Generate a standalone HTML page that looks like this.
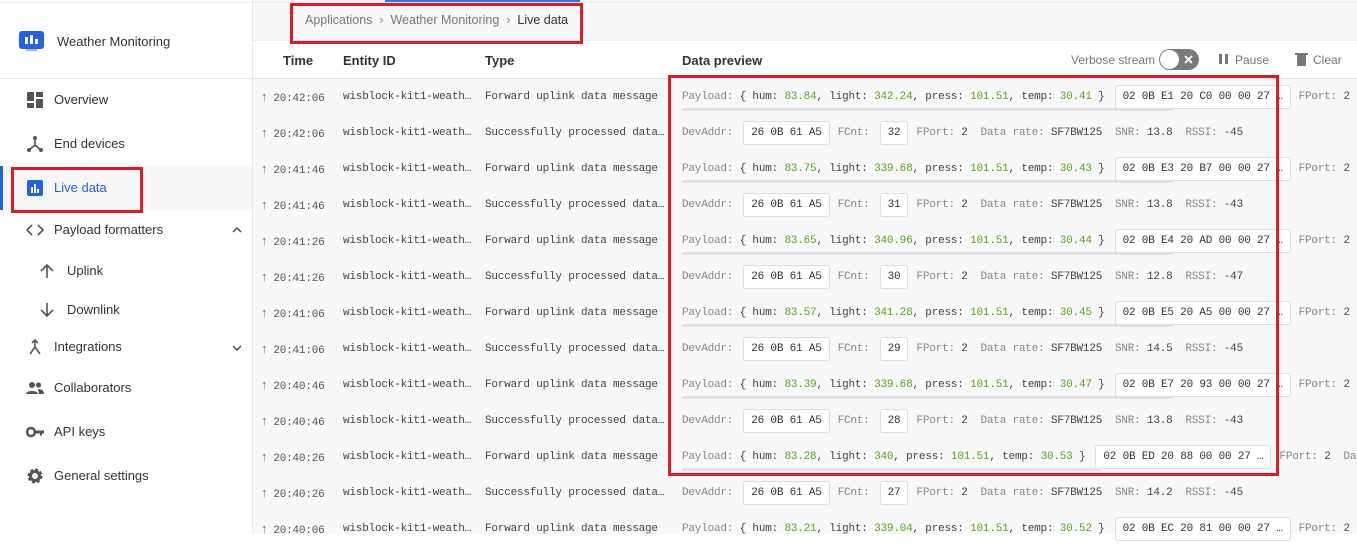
<!DOCTYPE html>
<html><head><meta charset="utf-8"><style>
*{box-sizing:border-box;margin:0;padding:0}
body{width:1357px;height:534px;overflow:hidden;background:#fff;font-family:"Liberation Sans",sans-serif;position:relative;color:#222}
.sb{position:absolute;left:0;top:0;width:253px;height:534px;background:#fff;border-right:1px solid #e8e8e8}
.topline{position:absolute;left:0;top:0;width:1357px;height:3px;border-bottom:1px solid #eee}
.blue{position:absolute;left:385px;top:0;width:195px;height:2px;background:#3b6fe0}
.nav{position:absolute;left:0;width:252px;height:44px;font-size:13px;color:#333}
.nav .ic{position:absolute;left:26px;top:13px;width:18px;height:18px}
.nav span{position:absolute;left:54px;top:14px}
.main{position:absolute;left:253px;top:0;right:0;bottom:0;background:#f8f8f8}
.hdr{position:absolute;left:253px;top:40px;right:0;height:39px;background:#fff;border-top:1px solid #eee;border-bottom:1px solid #e6e6e6;font-size:13px;color:#333}
.hdr b{position:absolute;top:12px;font-weight:bold}
.row{position:absolute;left:253px;right:0;height:36px;font-family:"Liberation Mono",monospace;font-size:11px;line-height:13px;color:#444;white-space:nowrap;overflow:hidden;letter-spacing:-0.2px}
.row .t{position:absolute;left:8px;top:10px;color:#555;line-height:16px}
.row .t i{font-style:normal;font-family:"Liberation Sans";font-size:13px;color:#777;margin-right:6px}
.row .e{position:absolute;left:90px;top:12px}
.row .y{position:absolute;left:232px;top:12px}
.row .d{position:absolute;left:429px;top:6px;height:24px;line-height:24px;white-space:pre}
.k{color:#888}.g{color:#5aa51a}
.box{display:inline-block;vertical-align:top;background:#fff;border:1px solid #ddd;border-radius:3px;height:24px;line-height:22px;padding:0 7px;color:#333;margin:0 8px 0 10px}
.bar{position:absolute;left:429px;top:29px;width:491px;height:3px;background:#e2e2e2}
.red{position:absolute;border:3px solid #e01b24}
.hs{position:absolute;top:12px;color:#777;font-size:12px}
</style></head><body>
<div class="main"></div>
<div class="sb">
 <div style="position:absolute;left:19px;top:31px;width:25px;height:18px;background:#2262e6;border-radius:3px"></div>
 <div style="position:absolute;left:25px;top:37px;width:3px;height:7px;background:#fff"></div>
 <div style="position:absolute;left:30px;top:35px;width:3px;height:9px;background:#fff"></div>
 <div style="position:absolute;left:35px;top:39px;width:3px;height:5px;background:#fff"></div>
 <div style="position:absolute;left:26px;top:49px;width:11px;height:2px;background:#9bb8f0"></div>
 <div style="position:absolute;left:57px;top:34px;font-size:13px;color:#333">Weather Monitoring</div>
 <div style="position:absolute;left:0;top:78px;width:252px;height:1px;background:#e8e8e8"></div>
 <div class="nav" style="top:78px"><svg class="ic" viewBox="0 0 18 18"><rect x="1" y="1" width="7" height="9" fill="#555"/><rect x="10" y="1" width="7" height="5" fill="#555"/><rect x="1" y="12" width="7" height="5" fill="#555"/><rect x="10" y="8" width="7" height="9" fill="#555"/></svg><span>Overview</span></div>
 <div class="nav" style="top:122px"><svg class="ic" viewBox="0 0 18 18"><path d="M9 3v7M9 10l-6 5M9 10l6 5" stroke="#555" stroke-width="1.6" fill="none"/><circle cx="9" cy="3" r="2" fill="#555"/><circle cx="3" cy="15" r="2" fill="#555"/><circle cx="15" cy="15" r="2" fill="#555"/></svg><span>End devices</span></div>
 <div class="nav" style="top:166px;background:#f7f7f7;color:#2262e6"><div style="position:absolute;left:0;top:0;width:3px;height:44px;background:#2262e6"></div><svg class="ic" viewBox="0 0 18 18"><rect x="1" y="1" width="16" height="16" rx="2" fill="#2262e6"/><rect x="5" y="8" width="2" height="6" fill="#fff"/><rect x="8" y="5" width="2" height="9" fill="#fff"/><rect x="11" y="10" width="2" height="4" fill="#fff"/></svg><span>Live data</span></div>
 <div class="nav" style="top:208px"><svg class="ic" viewBox="0 0 18 18"><path d="M6 4L1 9l5 5M12 4l5 5-5 5" stroke="#555" stroke-width="1.6" fill="none"/></svg><span>Payload formatters</span><svg style="position:absolute;left:232px;top:19px" width="10" height="6" viewBox="0 0 10 6"><path d="M1 5l4-4 4 4" stroke="#444" stroke-width="1.4" fill="none"/></svg></div>
 <div class="nav" style="top:249px"><svg class="ic" style="left:38px" viewBox="0 0 18 18"><path d="M9 16V3M3 9l6-6 6 6" stroke="#555" stroke-width="1.6" fill="none"/></svg><span style="left:67px">Uplink</span></div>
 <div class="nav" style="top:288px"><svg class="ic" style="left:38px" viewBox="0 0 18 18"><path d="M9 2v13M3 9l6 6 6-6" stroke="#555" stroke-width="1.6" fill="none"/></svg><span style="left:67px">Downlink</span></div>
 <div class="nav" style="top:325px"><svg class="ic" viewBox="0 0 18 18"><path d="M9 2v7l-5 7M9 9l5 7M6 5l3-3 3 3" stroke="#555" stroke-width="1.6" fill="none"/></svg><span>Integrations</span><svg style="position:absolute;left:232px;top:20px" width="10" height="6" viewBox="0 0 10 6"><path d="M1 1l4 4 4-4" stroke="#444" stroke-width="1.4" fill="none"/></svg></div>
 <div class="nav" style="top:366px"><svg class="ic" viewBox="0 0 18 18"><circle cx="6" cy="6" r="3" fill="#555"/><circle cx="12.5" cy="6" r="2.6" fill="#555"/><path d="M0 15c0-4 12-4 12 0z M12 10c3 0 6 1 6 5h-5z" fill="#555"/></svg><span>Collaborators</span></div>
 <div class="nav" style="top:410px"><svg class="ic" viewBox="0 0 18 18"><circle cx="5" cy="9" r="4" fill="none" stroke="#555" stroke-width="2.5"/><path d="M9 7.5h9v3h-2v2h-2v-2H9z" fill="#555"/></svg><span>API keys</span></div>
 <div class="nav" style="top:454px"><svg class="ic" viewBox="0 0 18 18"><circle cx="9" cy="9" r="5.5" fill="none" stroke="#555" stroke-width="4" stroke-dasharray="2.6 1.7"/><circle cx="9" cy="9" r="4.5" fill="none" stroke="#555" stroke-width="3"/></svg><span>General settings</span></div>
</div>
<div class="topline"></div><div class="blue"></div>
<div style="position:absolute;left:305px;top:13px;font-size:12.5px;color:#777;white-space:pre">Applications  <span style="color:#888">&#8250;</span>  Weather Monitoring  <span style="color:#888">&#8250;</span>  <span style="color:#333">Live data</span></div>
<div class="hdr">
 <b style="left:30px">Time</b><b style="left:90px">Entity ID</b><b style="left:232px">Type</b><b style="left:429px">Data preview</b>
 <span class="hs" style="left:818px">Verbose stream</span>
 <div style="position:absolute;left:906px;top:8px;width:40px;height:21px;border-radius:11px;background:#7a7a7a"></div>
 <div style="position:absolute;left:907px;top:9px;width:19px;height:19px;border-radius:50%;background:#fff"></div>
 <svg style="position:absolute;left:931px;top:14px" width="9" height="9" viewBox="0 0 9 9"><path d="M1 1l7 7M8 1l-7 7" stroke="#fff" stroke-width="1.8"/></svg>
 <div style="position:absolute;left:966px;top:13px;width:3px;height:10px;background:#777"></div>
 <div style="position:absolute;left:972px;top:13px;width:3px;height:10px;background:#777"></div>
 <span class="hs" style="left:982px">Pause</span>
 <div style="position:absolute;left:1044px;top:14px;width:9px;height:11px;background:#777"></div><div style="position:absolute;left:1042px;top:12px;width:13px;height:2px;background:#777"></div>
 <span class="hs" style="left:1060px">Clear</span>
</div>

<div class="row" style="top:79px"><span class="t"><i>&#8593;</i>20:42:06</span><span class="e">wisblock-kit1-weath…</span><span class="y">Forward uplink data message</span><div class="d"><span class="k">Payload:</span> { hum: <span class="g">83.84</span>, light: <span class="g">342.24</span>, press: <span class="g">101.51</span>, temp: <span class="g">30.41</span> }<span class="box">02 0B E1 20 C0 00 00 27 …</span><span class="k">FPort:</span> 2  <span class="k">Data rate</span></div><div class="bar"></div></div>
<div class="row" style="top:115px"><span class="t"><i>&#8593;</i>20:42:06</span><span class="e">wisblock-kit1-weath…</span><span class="y">Successfully processed data…</span><div class="d"><span class="k">DevAddr:</span><span class="box">26 0B 61 A5</span><span class="k">FCnt:</span><span class="box">32</span><span class="k">FPort:</span> 2  <span class="k">Data rate:</span> SF7BW125  <span class="k">SNR:</span> 13.8  <span class="k">RSSI:</span> -45</div></div>
<div class="row" style="top:151px"><span class="t"><i>&#8593;</i>20:41:46</span><span class="e">wisblock-kit1-weath…</span><span class="y">Forward uplink data message</span><div class="d"><span class="k">Payload:</span> { hum: <span class="g">83.75</span>, light: <span class="g">339.68</span>, press: <span class="g">101.51</span>, temp: <span class="g">30.43</span> }<span class="box">02 0B E3 20 B7 00 00 27 …</span><span class="k">FPort:</span> 2  <span class="k">Data rate</span></div><div class="bar"></div></div>
<div class="row" style="top:187px"><span class="t"><i>&#8593;</i>20:41:46</span><span class="e">wisblock-kit1-weath…</span><span class="y">Successfully processed data…</span><div class="d"><span class="k">DevAddr:</span><span class="box">26 0B 61 A5</span><span class="k">FCnt:</span><span class="box">31</span><span class="k">FPort:</span> 2  <span class="k">Data rate:</span> SF7BW125  <span class="k">SNR:</span> 13.8  <span class="k">RSSI:</span> -43</div></div>
<div class="row" style="top:223px"><span class="t"><i>&#8593;</i>20:41:26</span><span class="e">wisblock-kit1-weath…</span><span class="y">Forward uplink data message</span><div class="d"><span class="k">Payload:</span> { hum: <span class="g">83.65</span>, light: <span class="g">340.96</span>, press: <span class="g">101.51</span>, temp: <span class="g">30.44</span> }<span class="box">02 0B E4 20 AD 00 00 27 …</span><span class="k">FPort:</span> 2  <span class="k">Data rate</span></div><div class="bar"></div></div>
<div class="row" style="top:259px"><span class="t"><i>&#8593;</i>20:41:26</span><span class="e">wisblock-kit1-weath…</span><span class="y">Successfully processed data…</span><div class="d"><span class="k">DevAddr:</span><span class="box">26 0B 61 A5</span><span class="k">FCnt:</span><span class="box">30</span><span class="k">FPort:</span> 2  <span class="k">Data rate:</span> SF7BW125  <span class="k">SNR:</span> 12.8  <span class="k">RSSI:</span> -47</div></div>
<div class="row" style="top:295px"><span class="t"><i>&#8593;</i>20:41:06</span><span class="e">wisblock-kit1-weath…</span><span class="y">Forward uplink data message</span><div class="d"><span class="k">Payload:</span> { hum: <span class="g">83.57</span>, light: <span class="g">341.28</span>, press: <span class="g">101.51</span>, temp: <span class="g">30.45</span> }<span class="box">02 0B E5 20 A5 00 00 27 …</span><span class="k">FPort:</span> 2  <span class="k">Data rate</span></div><div class="bar"></div></div>
<div class="row" style="top:331px"><span class="t"><i>&#8593;</i>20:41:06</span><span class="e">wisblock-kit1-weath…</span><span class="y">Successfully processed data…</span><div class="d"><span class="k">DevAddr:</span><span class="box">26 0B 61 A5</span><span class="k">FCnt:</span><span class="box">29</span><span class="k">FPort:</span> 2  <span class="k">Data rate:</span> SF7BW125  <span class="k">SNR:</span> 14.5  <span class="k">RSSI:</span> -45</div></div>
<div class="row" style="top:367px"><span class="t"><i>&#8593;</i>20:40:46</span><span class="e">wisblock-kit1-weath…</span><span class="y">Forward uplink data message</span><div class="d"><span class="k">Payload:</span> { hum: <span class="g">83.39</span>, light: <span class="g">339.68</span>, press: <span class="g">101.51</span>, temp: <span class="g">30.47</span> }<span class="box">02 0B E7 20 93 00 00 27 …</span><span class="k">FPort:</span> 2  <span class="k">Data rate</span></div><div class="bar"></div></div>
<div class="row" style="top:403px"><span class="t"><i>&#8593;</i>20:40:46</span><span class="e">wisblock-kit1-weath…</span><span class="y">Successfully processed data…</span><div class="d"><span class="k">DevAddr:</span><span class="box">26 0B 61 A5</span><span class="k">FCnt:</span><span class="box">28</span><span class="k">FPort:</span> 2  <span class="k">Data rate:</span> SF7BW125  <span class="k">SNR:</span> 13.8  <span class="k">RSSI:</span> -43</div></div>
<div class="row" style="top:439px"><span class="t"><i>&#8593;</i>20:40:26</span><span class="e">wisblock-kit1-weath…</span><span class="y">Forward uplink data message</span><div class="d"><span class="k">Payload:</span> { hum: <span class="g">83.28</span>, light: <span class="g">340</span>, press: <span class="g">101.51</span>, temp: <span class="g">30.53</span> }<span class="box">02 0B ED 20 88 00 00 27 …</span><span class="k">FPort:</span> 2  <span class="k">Data rate</span></div><div class="bar" style="width:420px"></div></div>
<div class="row" style="top:475px"><span class="t"><i>&#8593;</i>20:40:26</span><span class="e">wisblock-kit1-weath…</span><span class="y">Successfully processed data…</span><div class="d"><span class="k">DevAddr:</span><span class="box">26 0B 61 A5</span><span class="k">FCnt:</span><span class="box">27</span><span class="k">FPort:</span> 2  <span class="k">Data rate:</span> SF7BW125  <span class="k">SNR:</span> 14.2  <span class="k">RSSI:</span> -45</div></div>
<div class="row" style="top:511px"><span class="t"><i>&#8593;</i>20:40:06</span><span class="e">wisblock-kit1-weath…</span><span class="y">Forward uplink data message</span><div class="d"><span class="k">Payload:</span> { hum: <span class="g">83.21</span>, light: <span class="g">339.04</span>, press: <span class="g">101.51</span>, temp: <span class="g">30.52</span> }<span class="box">02 0B EC 20 81 00 00 27 …</span><span class="k">FPort:</span> 2  <span class="k">Data rate</span></div></div>

<div class="red" style="left:290px;top:3px;width:293px;height:41px"></div>
<div class="red" style="left:11px;top:167px;width:132px;height:46px"></div>
<div class="red" style="left:668px;top:75px;width:611px;height:401px"></div>
</body></html>
